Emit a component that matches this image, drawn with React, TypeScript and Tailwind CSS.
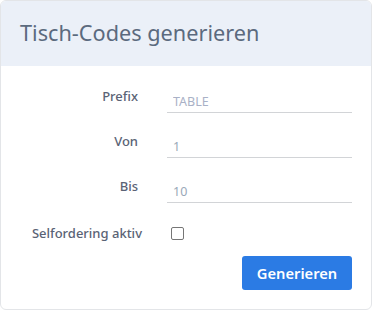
const rows = [
  { label: 'Prefix', value: '', placeholder: 'TABLE' },
  { label: 'Von', value: '1', placeholder: '' },
  { label: 'Bis', value: '10', placeholder: '' },
];

export default function App() {
  return (
    <main className="h-[311px] w-[372px] bg-white font-['Noto_Sans',sans-serif]">
      <section className="flex h-[310px] flex-col overflow-hidden rounded-md border border-[#e3e5e8] bg-white">
        <header className="flex h-[65px] items-center bg-[#ebf0f8] px-[19px]">
          <h2 className="text-[21.7px] font-normal text-[#5b6a7e]">Tisch-Codes generieren</h2>
        </header>

        <div className="flex flex-col px-[19px] pt-[14px] pb-[18px]">
          {rows.map((row, i) => (
            <div key={row.label} className={`flex items-start ${i > 0 ? 'mt-[12px]' : ''}`}>
              <label className="w-[122px] pt-[6px] text-right text-[13px] leading-5 font-medium text-[#5a6375]">
                {row.label}
              </label>
              <input
                defaultValue={row.value}
                placeholder={row.placeholder}
                className="ml-[29px] h-[33px] flex-1 border-b border-[#d2d4d7] pl-[6px] pt-[13px] pb-[3px] text-[12.5px] leading-4 text-[#9aa8b8] outline-none placeholder:text-[#a9b1c6]"
              />
            </div>
          ))}

          <div className="mt-[12px] flex h-[36px] items-center">
            <span className="w-[122px] text-right text-[13px] leading-5 font-medium text-[#5a6375]">
              Selfordering aktiv
            </span>
            <span className="ml-[29px] h-[13px] w-[13px] rounded-[2px] border border-[#767676] bg-white" />
          </div>

          <div className="mt-[5px] flex justify-end">
            <button className="h-[34px] w-[110px] rounded-[3px] bg-[#2b7be4] text-[14.7px] font-semibold text-white">
              Generieren
            </button>
          </div>
        </div>
      </section>
    </main>
  );
}
